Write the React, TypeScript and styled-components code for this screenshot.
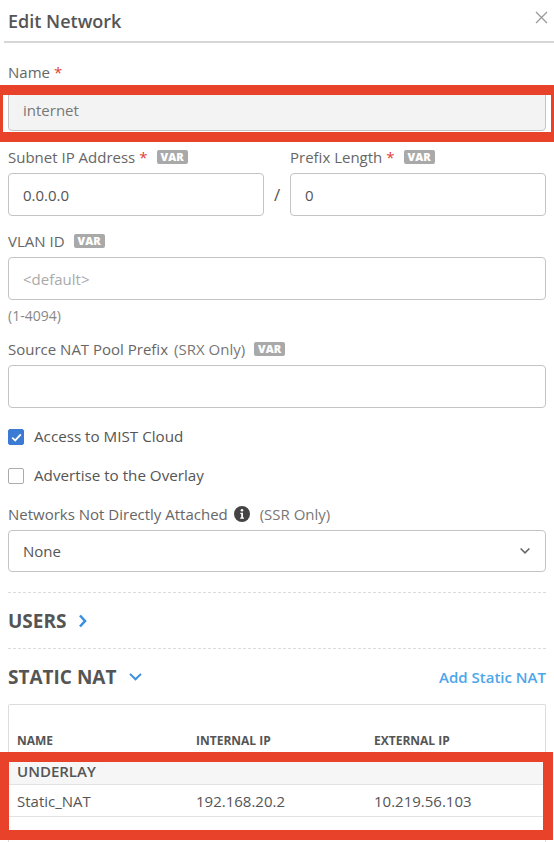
import React from "react";
import styled, { createGlobalStyle } from "styled-components";

const Global = createGlobalStyle`
  html, body { margin: 0; padding: 0; background: #fff; }
  body { font-family: "Open Sans", "Noto Sans", sans-serif; color: #555; }
  * { box-sizing: border-box; }
`;

const Page = styled.div`
  position: relative;
  width: 554px;
  height: 842px;
  overflow: hidden;
  background: #fff;
`;

const Header = styled.div`
  display: flex;
  align-items: center;
  justify-content: space-between;
  height: 43px;
  margin-left: 4px;
  padding: 0 6px 0 4px;
  border-bottom: 2px solid #d6d6d6;
`;

const Title = styled.h1`
  margin: 0;
  font-size: 18px;
  font-weight: 600;
  color: #555;
`;

const Close = styled.button`
  border: 0;
  background: none;
  padding: 0;
  margin-top: -6px;
  display: flex;
  cursor: pointer;
`;

const Body = styled.div`
  padding: 19px 8px 0;
  display: flex;
  flex-direction: column;
`;

const Field = styled.div<{ $mb?: number }>`
  display: flex;
  flex-direction: column;
  margin-bottom: ${(p) => p.$mb ?? 15}px;
  flex: 1;
`;

const Label = styled.label`
  display: flex;
  align-items: center;
  gap: 6px;
  height: 20px;
  margin-bottom: 6px;
  font-size: 15px;
  color: #666;
  white-space: nowrap;
`;

const Req = styled.span`
  color: #e0413a;
  margin-left: -2px;
`;

const Muted = styled.span`
  color: #777;
`;

const Var = styled.span`
  display: inline-block;
  background: #a9a9a9;
  color: #fff;
  font-size: 11px;
  font-weight: 800;
  line-height: 14px;
  padding: 0 4px;
  border-radius: 2px;
  margin-left: 3px;
`;

const Input = styled.div<{ $disabled?: boolean; $placeholder?: boolean }>`
  height: 43px;
  border: 1px solid #c4c4c4;
  border-radius: 4px;
  background: ${(p) => (p.$disabled ? "#f3f3f3" : "#fff")};
  display: flex;
  align-items: center;
  padding: 0 14px;
  font-size: 15px;
  color: ${(p) => (p.$placeholder ? "#aaa" : p.$disabled ? "#777" : "#555")};
`;

const Row = styled.div`
  display: flex;
  align-items: flex-start;
`;

const Slash = styled.div`
  width: 26px;
  margin-top: 26px;
  height: 43px;
  display: flex;
  align-items: center;
  justify-content: center;
  font-size: 17px;
  color: #555;
`;

const Hint = styled.div`
  font-size: 14px;
  color: #888;
  margin-top: 6px;
  line-height: 20px;
`;

const Check = styled.div<{ $mb: number }>`
  display: flex;
  align-items: center;
  gap: 10px;
  height: 20px;
  margin-bottom: ${(p) => p.$mb}px;
  font-size: 15.2px;
  color: #555;
`;

const Box = styled.span<{ $on?: boolean }>`
  width: 16px;
  height: 16px;
  border-radius: 2px;
  border: 1px solid ${(p) => (p.$on ? "#3b7bd4" : "#aaa")};
  background: ${(p) => (p.$on ? "#3b7bd4" : "#fff")};
  display: flex;
  align-items: center;
  justify-content: center;
  margin-top: 2px;
`;

const Select = styled(Input)`
  justify-content: space-between;
  height: 42px;
  padding-right: 14px;
`;

const Divider = styled.div`
  border-top: 1px dashed #dcdcdc;
`;

const Section = styled.div`
  display: flex;
  align-items: center;
  justify-content: space-between;
  height: 55px;
`;

const SectionTitle = styled.div`
  display: flex;
  align-items: center;
  gap: 12px;
  font-size: 19px;
  font-weight: 700;
  color: #555;
`;

const Link = styled.a`
  font-size: 15px;
  font-weight: 600;
  color: #4ea6ea;
  text-decoration: none;
`;

const Table = styled.div`
  border: 1px solid #dcdcdc;
  border-bottom: 0;
  border-radius: 2px 2px 0 0;
  height: 200px;
`;

const Cols = styled.div`
  display: grid;
  grid-template-columns: 179px 178px 1fr;
  padding-left: 8px;
`;

const HeadRow = styled(Cols)`
  height: 56px;
  align-items: end;
  padding-bottom: 12px;
  font-size: 12px;
  font-weight: 700;
  line-height: 16px;
  color: #555;
`;

const Group = styled.div`
  height: 24px;
  background: #f6f6f6;
  border-bottom: 1px solid #e2e2e2;
  padding: 0 0 3px 8px;
  display: flex;
  align-items: center;
  font-size: 15px;
  font-weight: 600;
  color: #555;
`;

const DataRow = styled(Cols)`
  height: 32px;
  align-items: center;
  border-bottom: 1px solid #e2e2e2;
  font-size: 15px;
  color: #555;
`;

const Mark = styled.div`
  position: absolute;
  border-style: solid;
  border-color: #e8422a;
  pointer-events: none;
`;

const NameMark = styled(Mark)`
  left: 0;
  top: 85px;
  width: 554px;
  height: 57px;
  border-width: 10px 3px 10px 3px;
`;

const RowMark = styled(Mark)`
  left: 0;
  top: 752px;
  width: 553px;
  height: 88px;
  border-width: 10px 10px 10px 9px;
`;

const CloseIcon = () => (
  <svg width="13" height="13" viewBox="0 0 13 13">
    <path d="M1 1L12 12M12 1L1 12" stroke="#9a9a9a" strokeWidth="1.3" />
  </svg>
);

const Tick = () => (
  <svg width="11" height="9" viewBox="0 0 11 9">
    <path d="M1.2 4.6L4.2 7.4L9.8 1.4" fill="none" stroke="#fff" strokeWidth="1.8" />
  </svg>
);

const Info = () => (
  <svg width="16" height="16" viewBox="0 0 16 16">
    <circle cx="8" cy="8" r="8" fill="#444" />
    <circle cx="8" cy="4.3" r="1.3" fill="#fff" />
    <path d="M6.3 6.7H9V11.6H10V12.8H6.2V11.6H7.2V7.9H6.3Z" fill="#fff" />
  </svg>
);

const ChevronDown = ({ color = "#666", size = 12 }: { color?: string; size?: number }) => (
  <svg width={size} height={size * 0.65} viewBox="0 0 12 8">
    <path d="M1.5 1.5L6 6L10.5 1.5" fill="none" stroke={color} strokeWidth="1.6" />
  </svg>
);

const ChevronRight = () => (
  <svg width="9" height="14" viewBox="0 0 9 14">
    <path d="M2 1.5L7 7L2 12.5" fill="none" stroke="#3b8ee0" strokeWidth="2.6" />
  </svg>
);

export default function App() {
  return (
    <>
      <Global />
      <Page>
        <Header>
          <Title>Edit Network</Title>
          <Close aria-label="Close">
            <CloseIcon />
          </Close>
        </Header>
        <Body>
          <Field $mb={16}>
            <Label>
              Name <Req>*</Req>
            </Label>
            <Input $disabled>internet</Input>
          </Field>

          <Row>
            <Field>
              <Label>
                Subnet IP Address <Req>*</Req> <Var>VAR</Var>
              </Label>
              <Input>0.0.0.0</Input>
            </Field>
            <Slash>/</Slash>
            <Field>
              <Label>
                Prefix Length <Req>*</Req> <Var>VAR</Var>
              </Label>
              <Input>0</Input>
            </Field>
          </Row>

          <Field $mb={13}>
            <Label>
              VLAN ID <Var>VAR</Var>
            </Label>
            <Input $placeholder>&lt;default&gt;</Input>
            <Hint>(1-4094)</Hint>
          </Field>

          <Field $mb={18}>
            <Label>
              Source NAT Pool Prefix <Muted>(SRX Only)</Muted> <Var>VAR</Var>
            </Label>
            <Input />
          </Field>

          <Check $mb={19}>
            <Box $on>
              <Tick />
            </Box>
            Access to MIST Cloud
          </Check>
          <Check $mb={19}>
            <Box />
            Advertise to the Overlay
          </Check>

          <Field $mb={20}>
            <Label>
              Networks Not Directly Attached <Info /> <Muted>&nbsp;(SSR Only)</Muted>
            </Label>
            <Select>
              None
              <ChevronDown />
            </Select>
          </Field>

          <Divider />
          <Section>
            <SectionTitle>
              USERS <ChevronRight />
            </SectionTitle>
          </Section>
          <Divider />
          <Section>
            <SectionTitle>
              STATIC NAT <ChevronDown color="#3b8ee0" size={15} />
            </SectionTitle>
            <Link href="#">Add Static NAT</Link>
          </Section>

          <Table>
            <HeadRow>
              <span>NAME</span>
              <span>INTERNAL IP</span>
              <span>EXTERNAL IP</span>
            </HeadRow>
            <Group>UNDERLAY</Group>
            <DataRow>
              <span>Static_NAT</span>
              <span>192.168.20.2</span>
              <span>10.219.56.103</span>
            </DataRow>
          </Table>
        </Body>
        <NameMark />
        <RowMark />
      </Page>
    </>
  );
}
